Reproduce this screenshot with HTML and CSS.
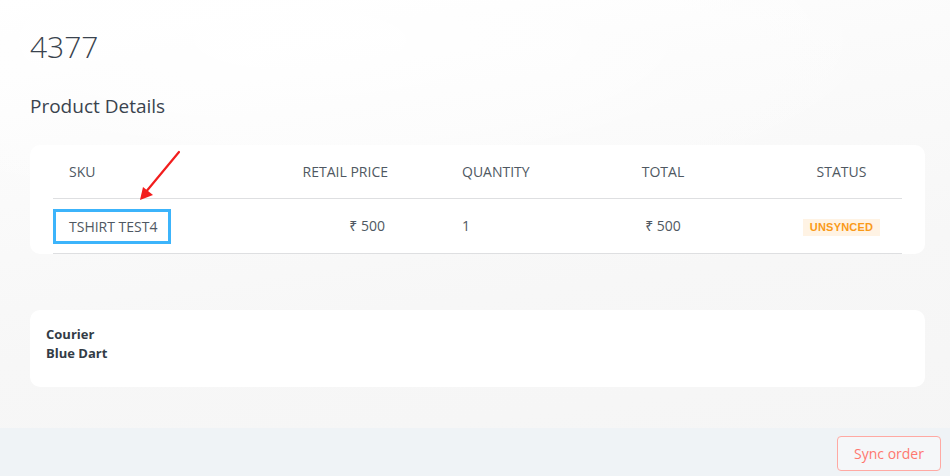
FILE: index.html
```html
<!DOCTYPE html>
<html lang="en">
<head>
<meta charset="utf-8">
<title>Order 4377</title>
<link rel="stylesheet" href="styles.css">
</head>
<body>
  <main class="page">
    <h1 class="order-id">4377</h1>
    <h2 class="section-title">Product Details</h2>
    <section class="card table-card">
      <div class="table">
        <div class="row head">
          <div class="cell sku">SKU</div>
          <div class="cell price">RETAIL PRICE</div>
          <div class="cell qty">QUANTITY</div>
          <div class="cell total">TOTAL</div>
          <div class="cell status">STATUS</div>
        </div>
        <div class="row body">
          <div class="cell sku"><span class="highlight">TSHIRT TEST4</span></div>
          <div class="cell price">₹ 500</div>
          <div class="cell qty">1</div>
          <div class="cell total">₹ 500</div>
          <div class="cell status"><span class="badge">UNSYNCED</span></div>
        </div>
      </div>
      <svg class="arrow" width="60" height="70" viewBox="0 0 60 70" aria-hidden="true">
        <line x1="50" y1="7" x2="16" y2="48" stroke="#f21d1d" stroke-width="2.2" stroke-linecap="round"/>
        <polygon points="11,55 14,42 24,50" fill="#f21d1d"/>
      </svg>
    </section>
    <section class="card courier-card">
      <div class="courier-label">Courier</div>
      <div class="courier-name">Blue Dart</div>
    </section>
  </main>
  <footer class="footer">
    <button class="sync-btn" type="button">Sync order</button>
  </footer>
</body>
</html>
```
FILE: styles.css
```css
* { box-sizing: border-box; }

html, body {
  margin: 0;
  padding: 0;
}

body {
  width: 950px;
  height: 476px;
  overflow: hidden;
  display: flex;
  flex-direction: column;
  font-family: "Open Sans", "Noto Sans", sans-serif;
  color: #3a434e;
  background:
    radial-gradient(ellipse 900px 260px at 300px 40px, rgba(255,255,255,0.9), rgba(255,255,255,0) 70%),
    linear-gradient(172deg, #ffffff 0%, #fbfbfb 25%, #f7f7f7 60%, #f5f5f5 100%);
}

.page {
  flex: 1;
  padding: 27px 25px 0 30px;
}

.order-id {
  margin: 0;
  font-size: 30px;
  line-height: 40px;
  font-weight: 300;
  color: #3a434e;
}

.section-title {
  margin: 26px 0 0;
  font-size: 19px;
  line-height: 27px;
  font-weight: 400;
  color: #3a434e;
}

.card {
  background: #ffffff;
  border-radius: 10px;
}

.table-card {
  position: relative;
  margin-top: 25px;
  padding: 0 23px;
}

.table {
  display: flex;
  flex-direction: column;
}

.row {
  display: grid;
  grid-template-columns: 147px 204px 200px 118px 1fr;
  align-items: center;
  border-bottom: 1px solid #dedfe1;
  font-size: 14px;
  line-height: 20px;
  color: #4f5862;
}

.row.head { height: 54px; }
.row.body { height: 55px; }

.cell { padding: 0 16px; white-space: nowrap; }

.cell.sku { padding-left: 16px; }
.row.body .cell.sku { padding-left: 0; }
.cell.price { text-align: right; }
.row.body .cell.price { padding-right: 19px; }
.cell.qty { padding-left: 58px; }
.cell.total { text-align: center; padding: 0; }
.cell.status { text-align: center; padding: 0 0 0 59px; }

.highlight {
  display: inline-block;
  border: 3px solid #3cb4fb;
  padding: 5px 10px 4px 13px;
}

.badge {
  display: inline-block;
  background: #fff3e4;
  color: #fa9a19;
  font-family: "Liberation Sans", Arial, sans-serif;
  font-weight: 700;
  font-size: 11px;
  letter-spacing: 0.2px;
  line-height: 17px;
  padding: 0 7px;
}

.arrow {
  position: absolute;
  left: 99px;
  top: 0;
}

.courier-card {
  margin-top: 56px;
  padding: 15px 16px 24px;
  font-size: 13px;
  line-height: 19px;
  font-weight: 700;
  color: #333c46;
}

.footer {
  height: 48px;
  flex: none;
  background: #eff3f6;
  display: flex;
  justify-content: flex-end;
  align-items: flex-start;
  padding: 8px 9px 0 0;
}

.sync-btn {
  height: 35px;
  width: 104px;
  border: 1px solid #ffa9a3;
  border-radius: 4px;
  background: #f5f7f9;
  color: #ff776f;
  font-family: "Open Sans", "Noto Sans", sans-serif;
  font-size: 14px;
  padding: 0;
  cursor: pointer;
}
```
